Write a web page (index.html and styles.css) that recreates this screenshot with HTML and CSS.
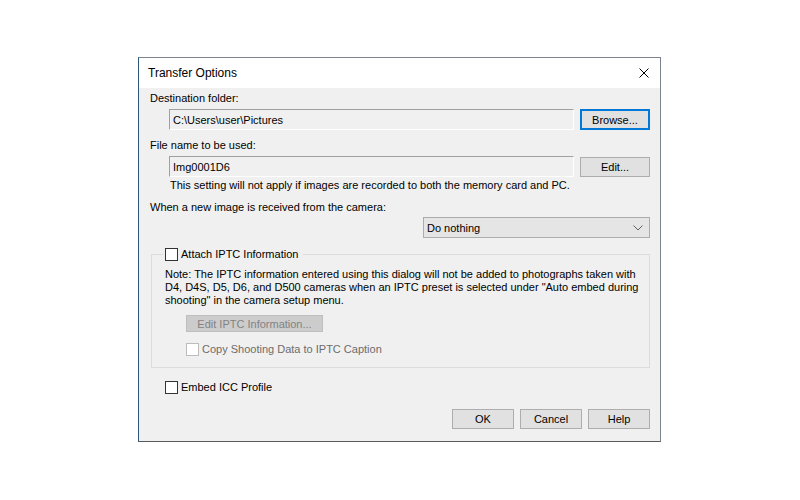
FILE: index.html
```html
<!DOCTYPE html>
<html lang="en">
<head>
  <meta charset="UTF-8" />
  <title>Transfer Options</title>
  <link rel="stylesheet" href="styles.css">
</head>
<body>

  <div class="dialog">
    <div class="titlebar">
      <span class="title">Transfer Options</span>
      <button class="close" title="Close">
        <svg width="10" height="10" viewBox="0 0 10 10">
          <path d="M0.5 0.5 L9.5 9.5 M9.5 0.5 L0.5 9.5" stroke="#000" stroke-width="1" fill="none" />
        </svg>
      </button>
    </div>

    <div class="dialog-body">
      <div class="label">Destination folder:</div>
      <div class="field-row">
        <input class="edit" type="text" id="destFolder" value="C:\Users\user\Pictures" readonly />
        <button class="btn btn-default">Browse...</button>
      </div>

      <div class="label">File name to be used:</div>
      <div class="field-row">
        <input class="edit" type="text" id="fileName" value="Img0001D6" readonly />
        <button class="btn btn-small">Edit...</button>
      </div>
      <div class="hint">This setting will not apply if images are recorded to both the memory card and PC.</div>

      <div class="label">When a new image is received from the camera:</div>
      <div class="combo-row">
        <div class="combo">
          <span>Do nothing</span>
          <svg width="10" height="6" viewBox="0 0 10 6">
            <path d="M0.5 0.5 L5 5 L9.5 0.5" stroke="#606060" stroke-width="1" fill="none" />
          </svg>
        </div>
      </div>

      <fieldset class="group">
        <legend><span class="check"></span>Attach IPTC Information</legend>
        <p class="note">
          Note: The IPTC information entered using this dialog will not be added to photographs taken with<br>
          D4, D4S, D5, D6, and D500 cameras when an IPTC preset is selected under "Auto embed during<br>
          shooting" in the camera setup menu.
        </p>
        <button class="btn btn-disabled" disabled>Edit IPTC Information...</button>
        <div class="check-row sub disabled"><span class="check"></span>Copy Shooting Data to IPTC Caption</div>
      </fieldset>

      <div class="check-row embed"><span class="check"></span>Embed ICC Profile</div>

      <div class="actions">
        <button class="btn btn-action">OK</button>
        <button class="btn btn-action">Cancel</button>
        <button class="btn btn-action">Help</button>
      </div>
    </div>
  </div>

</body>
</html>
```

FILE: styles.css
```css
* {
  box-sizing: border-box;
}

body {
  margin: 0;
  background-color: #ffffff;
  font-family: 'Liberation Sans', Arial, sans-serif;
  font-size: 11px;
  color: #000000;
}

.dialog {
  margin: 57px 0 0 138px;
  width: 523px;
  height: 385px;
  display: flex;
  flex-direction: column;
  border: 1px solid #7a8590;
  border-left-color: #2b5878;
  border-bottom-color: #5a5a5a;
}

.titlebar {
  height: 30px;
  background-color: #ffffff;
  display: flex;
  align-items: center;
  padding-left: 9px;
}

.title {
  font-size: 12px;
  flex: 1;
}

.close {
  width: 30px;
  height: 30px;
  margin-right: 1px;
  border: none;
  background: none;
  padding: 0;
  display: flex;
  align-items: center;
  justify-content: center;
}

.dialog-body {
  flex: 1;
  background-color: #f0f0f0;
  padding: 3px 10px 0 11px;
}

.label {
  line-height: 15px;
}

.label + .field-row {
  margin-top: 3px;
}

.field-row {
  display: flex;
  align-items: flex-start;
  height: 21px;
}

.field-row + .label {
  margin-top: 8px;
}

.edit {
  margin: 0 0 0 19px;
  width: 405px;
  height: 21px;
  padding: 0 3px;
  border: 1px solid;
  border-color: #a0a0a0 #ffffff #ffffff #a0a0a0;
  background-color: #f0f0f0;
  font: inherit;
  color: #000000;
  outline: none;
}

.btn {
  font: inherit;
  color: #000000;
  background-color: #e1e1e1;
  border: 1px solid #adadad;
  padding: 0;
}

.btn-default {
  margin-left: auto;
  width: 70px;
  height: 21px;
  border: 2px solid #0078d7;
}

.btn-small {
  margin: 1px 0 0 auto;
  width: 70px;
  height: 20px;
}

.hint {
  margin: 1px 0 0 20px;
  line-height: 15px;
}

.hint + .label {
  margin-top: 7px;
}

.combo-row {
  margin-top: 2px;
  display: flex;
  justify-content: flex-end;
}

.combo {
  width: 227px;
  height: 21px;
  background-color: #e5e5e5;
  border: 1px solid #acacac;
  display: flex;
  align-items: center;
  justify-content: space-between;
  padding: 0 6px 0 3px;
}

.group {
  margin: 9px 0 0 1px;
  padding: 6px 12px 10px 13px;
  border: 1px solid #dcdcdc;
  min-width: 0;
}

.group legend {
  display: flex;
  align-items: center;
  line-height: 15px;
  padding: 0 5px 0 2px;
  margin-left: -2px;
}

.check {
  display: inline-block;
  width: 13px;
  height: 13px;
  border: 1px solid #333333;
  background-color: #ffffff;
  margin-right: 3px;
}

.note {
  margin: 0;
  line-height: 13px;
  white-space: nowrap;
}

.btn-disabled {
  display: block;
  margin: 8px 0 0 21px;
  width: 137px;
  height: 17px;
  background-color: #cccccc;
  border-color: #bfbfbf;
  color: #838383;
}

.check-row {
  display: flex;
  align-items: center;
  line-height: 15px;
}

.check-row.sub {
  margin: 10px 0 0 21px;
}

.check-row.disabled {
  color: #6d6d6d;
}

.check-row.disabled .check {
  border-color: #bcbcbc;
}

.check-row.embed {
  margin: 12px 0 0 15px;
}

.actions {
  margin-top: 14px;
  display: flex;
  justify-content: flex-end;
  gap: 6px;
}

.btn-action {
  width: 62px;
  height: 20px;
}
```
